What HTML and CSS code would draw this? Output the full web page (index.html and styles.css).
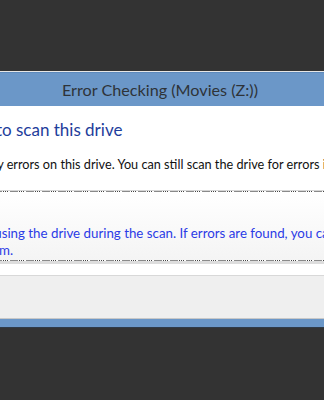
FILE: index.html
```
<!DOCTYPE html>
<html lang="en">
<head>
    <meta charset="UTF-8">
    <title>Error Checking</title>
    <link rel="stylesheet" href="styles.css">
</head>
<body>
    <div class="dialog">
        <div class="title-bar">Error Checking (Movies (Z:))</div>

        <div class="content">
            <h1 class="instruction">You don't need to scan this drive</h1>
            <p class="message">We haven't found any errors on this drive. You can still scan the drive for errors if you want.</p>
        </div>

        <div class="dotted"></div>

        <div class="command-area">
            <div class="command-link">
                <div class="command-title">Scan drive</div>
                <div class="command-note">You can keep using the drive during the scan. If errors are found, you can decide if you<br>want to fix them.</div>
            </div>
        </div>

        <div class="dotted"></div>
        <div class="spacer"></div>

        <div class="footer"></div>
    </div>
</body>
</html>
```

FILE: styles.css
```
html, body {
    margin: 0;
    padding: 0;
}

body {
    background: #333333;
    font-family: Lato, "Noto Sans", sans-serif;
    overflow: hidden;
    height: 400px;
    padding-top: 71px;
    box-sizing: border-box;
}

.dialog {
    width: 620px;
    margin-left: -150px;
    border-top: 1px solid #e6e6e6;
    background: #6b97c8;
    border-bottom: 1px solid #2e3a48;
}

.title-bar {
    height: 34px;
    line-height: 34px;
    text-align: center;
    font-size: 16.2px;
    color: #2e3338;
    border-top: 1px solid #5d89bb;
    box-sizing: border-box;
}

.content {
    background: #ffffff;
    padding: 12px 0 0 30px;
    height: 85px;
    box-sizing: border-box;
    border-bottom: 1px solid #d5d5d5;
    box-shadow: inset 0 -1px 0 #ffffff;
}

.instruction {
    margin: 0;
    font-size: 17px;
    font-weight: normal;
    color: #1e3d9b;
    line-height: 24px;
}

.message {
    margin: 14px 0 0 2px;
    font-size: 12.7px;
    color: #111111;
    line-height: 16px;
    white-space: nowrap;
}

.dotted {
    height: 1px;
    background: repeating-linear-gradient(90deg,
        #8a8a8a 0, #8a8a8a 8px,
        #ffffff 8px, #ffffff 9px,
        #444444 9px, #444444 10px,
        #ffffff 10px, #ffffff 11px,
        #444444 11px, #444444 12px,
        #ffffff 12px, #ffffff 13px,
        #444444 13px, #444444 14px,
        #ffffff 14px, #ffffff 16px);
}

.command-area {
    background: linear-gradient(#ffffff, #f4f4f4);
    height: 68px;
    padding: 2px 0 0 64px;
    box-sizing: border-box;
}

.command-title {
    font-size: 16px;
    color: #2a3bd8;
    line-height: 22px;
    visibility: hidden;
}

.command-note {
    margin-top: 9px;
    font-size: 13.3px;
    line-height: 17px;
    color: #2b3be6;
    white-space: nowrap;
}

.spacer {
    height: 11px;
    background: #ffffff;
    border-top: 3px solid #dddddd;
    border-bottom: 1px solid #d8d8d8;
}

.footer {
    height: 42px;
    background: #efefef;
    border-bottom: 1px solid #c8c8c8;
    margin-bottom: 8px;
}
```
